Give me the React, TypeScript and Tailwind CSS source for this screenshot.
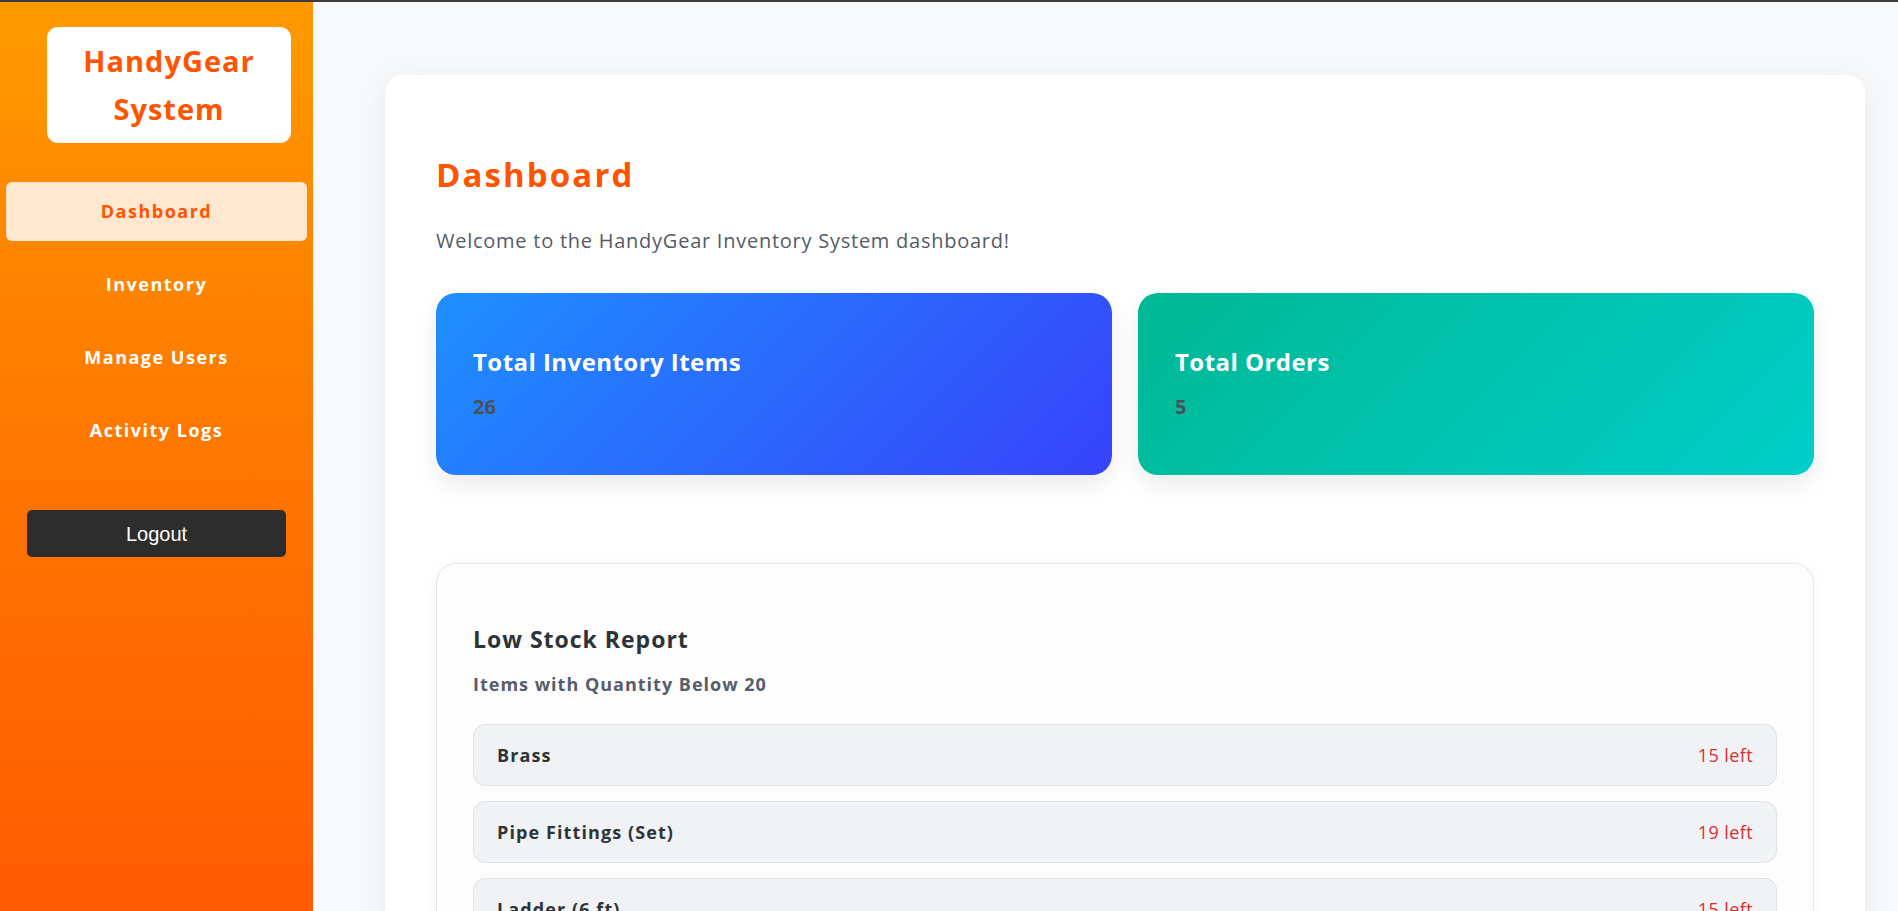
import React from 'react';

const navItems = ['Dashboard', 'Inventory', 'Manage Users', 'Activity Logs'];

const lowStock = [
  { name: 'Brass', qty: 15 },
  { name: 'Pipe Fittings (Set)', qty: 19 },
  { name: 'Ladder (6 ft)', qty: 15 },
  { name: 'Sandpaper Pack', qty: 12 },
];

function Sidebar() {
  return (
    <aside className="flex w-[313px] shrink-0 flex-col bg-[linear-gradient(180deg,#ff9a00_0%,#ff7a00_45%,#ff5a00_100%)]">
      <div className="ml-[47px] mt-[25px] flex h-[116px] w-[244px] flex-col items-center justify-center rounded-[11px] bg-white">
        <span className="text-[29px] font-bold leading-[48px] tracking-[1px] text-[#ff5500]">HandyGear</span>
        <span className="text-[29px] font-bold leading-[48px] tracking-[1px] text-[#ff5500]">System</span>
      </div>

      <nav className="mx-[6px] mt-[39px] flex flex-col gap-[14px]">
        {navItems.map((item, i) => (
          <a
            key={item}
            className={
              i === 0
                ? 'flex h-[59px] items-center justify-center rounded-[6px] bg-[#ffe8cf] text-[18px] font-bold tracking-[1.5px] text-[#ff5500]'
                : 'flex h-[59px] items-center justify-center rounded-[6px] text-[18px] font-bold tracking-[1.5px] text-white'
            }
          >
            {item}
          </a>
        ))}
      </nav>

      <button className="mx-[27px] mt-[50px] h-[47px] rounded-[5px] bg-[#2d2d2d] font-['Liberation_Sans',Arial,sans-serif] text-[20px] text-white">
        Logout
      </button>
    </aside>
  );
}

function StatCard({ title, value, gradient }: { title: string; value: number; gradient: string }) {
  return (
    <div className={`h-[182px] rounded-[20px] px-[37px] pt-[53px] shadow-[0_10px_25px_rgba(0,0,0,0.08)] ${gradient}`}>
      <h3 className="text-[24px] font-bold leading-[32px] tracking-[0.45px] text-white">{title}</h3>
      <p className="mt-[15px] text-[20px] font-bold leading-[28px] text-[#4b4f5c]">{value}</p>
    </div>
  );
}

export default function App() {
  return (
    <div className="flex h-screen flex-col overflow-hidden font-['Open_Sans',sans-serif]">
      <div className="h-[2px] shrink-0 bg-[#3c3c3c]" />
      <div className="flex min-h-0 flex-1">
        <Sidebar />

        <main className="min-w-0 flex-1 bg-[#f8f9fa] pl-[72px] pr-[33px] pt-[73px]">
          <div className="rounded-[18px] bg-white px-[51px] pt-[80px] shadow-[0_4px_30px_rgba(0,0,0,0.06)]">
            <h1 className="text-[33px] font-bold leading-[40px] tracking-[2.1px] text-[#ff5500]">Dashboard</h1>
            <p className="mt-[32px] text-[20px] leading-[28px] tracking-[0.75px] text-[#555b66]">
              Welcome to the HandyGear Inventory System dashboard!
            </p>

            <div className="mt-[38px] grid grid-cols-2 gap-[26px]">
              <StatCard
                title="Total Inventory Items"
                value={26}
                gradient="bg-[linear-gradient(135deg,#1e90ff,#3742fa)]"
              />
              <StatCard
                title="Total Orders"
                value={5}
                gradient="bg-[linear-gradient(135deg,#00b894,#00cec9)]"
              />
            </div>

            <section className="mt-[88px] rounded-[20px] border border-[#e3e5e9] bg-[#fdfdfd] px-[36px] pb-[40px] pt-[60px] shadow-[0_4px_20px_rgba(0,0,0,0.04)]">
              <h2 className="text-[23px] font-bold leading-[30px] tracking-[1px] text-[#2d3436]">Low Stock Report</h2>
              <h4 className="mt-[17px] text-[18px] font-bold leading-[26px] tracking-[1px] text-[#555e6b]">
                Items with Quantity Below 20
              </h4>
              <ul className="mt-[27px] flex flex-col gap-[15px]">
                {lowStock.map((it) => (
                  <li
                    key={it.name}
                    className="flex h-[62px] items-center justify-between rounded-[12px] border border-[#dfe3ea] bg-[#f1f2f6] px-[23px]"
                  >
                    <span className="text-[18px] font-bold tracking-[1.1px] text-[#2d3436]">{it.name}</span>
                    <span className="text-[18px] tracking-[0.4px] text-[#d63031]">{it.qty} left</span>
                  </li>
                ))}
              </ul>
            </section>
          </div>
        </main>
      </div>
    </div>
  );
}
